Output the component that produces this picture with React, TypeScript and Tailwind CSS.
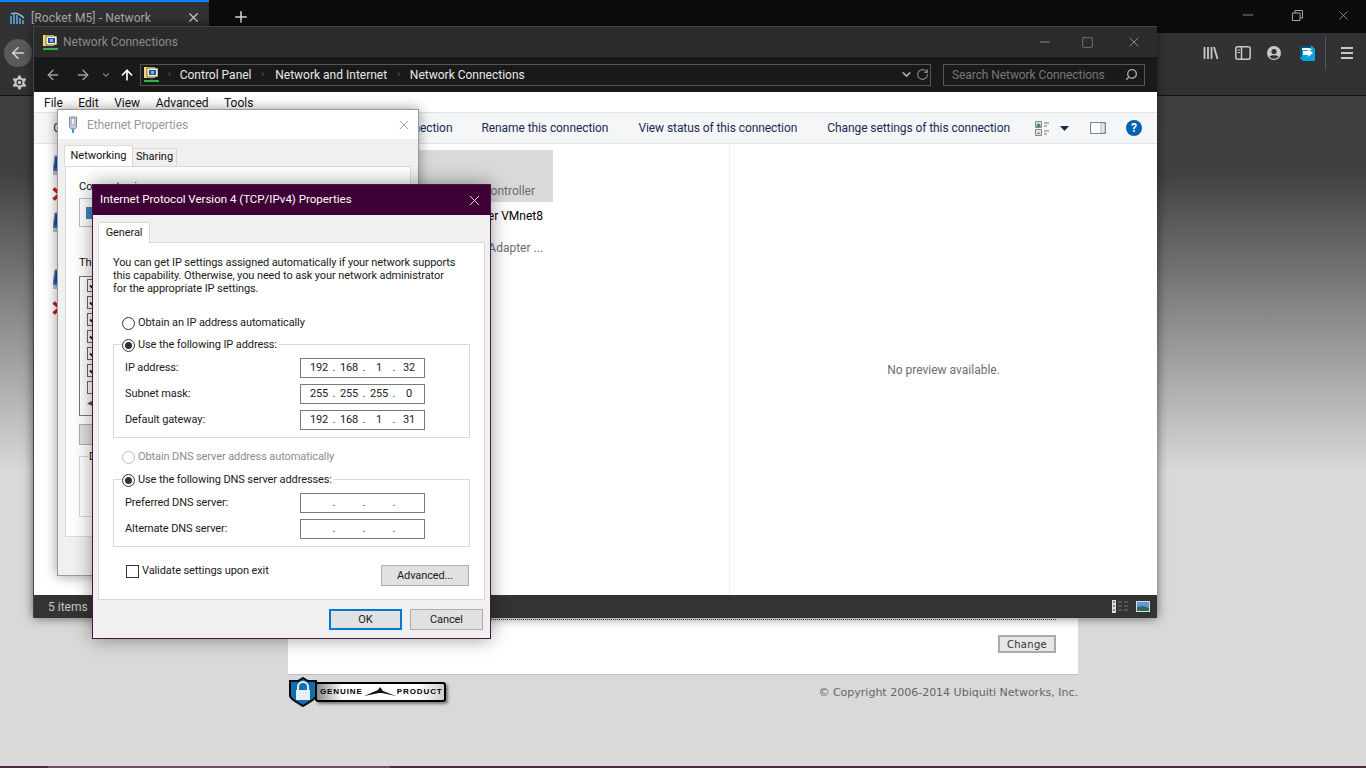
import { ArrowLeft, ArrowRight, ArrowUp, ChevronDown, Minus, Plus, RotateCw, Search, Settings, Square, X } from "lucide-react";

const NetIcon = () => (
  <svg width="17" height="17" viewBox="0 0 17 17" className="shrink-0">
    <path d="M1 1h11v11H1z" fill="#f3d675" />
    <path d="M4 2h11v9H4z" fill="#fdf3c4" stroke="#222" strokeWidth="0.6" />
    <path d="M6 4h7v5H6z" fill="#1b4fa8" />
    <path d="M8 5h3v3H8z" fill="#7fb2ea" />
    <path d="M7 12h3v2H7z" fill="#333" />
    <path d="M1 14h15v2H1z" fill="#2fb34a" />
  </svg>
);

const PlugIcon = () => (
  <svg width="12" height="18" viewBox="0 0 12 18" className="shrink-0">
    <path d="M2.5 1h7v10l-1.5 2h-4L2.500 11z" fill="#c4ced8" stroke="#7f8c99" />
    <path d="M4.500 2.500h3v6h-3z" fill="#eef2f6" stroke="#8b98a5" strokeWidth="0.6" />
    <path d="M5 13h2v4H5z" fill="#2a9fd6" />
  </svg>
);

const Monitor = ({ failed }: { failed?: boolean }) => (
  <div className="relative w-[20px] h-[32px] shrink-0">
    <svg width="20" height="22" viewBox="0 0 20 22" className="absolute left-[2px] top-[4px]">
      <path d="M2 1h16v15H0z" fill="#2e5fb8" stroke="#6f88b8" />
      <path d="M3 3h13v10H1.500z" fill="#1d49a5" />
      <path d="M0 17h18v3H0z" fill="#b9bfca" />
    </svg>
    {failed && (
      <svg width="10" height="14" viewBox="0 0 10 14" className="absolute left-[1px] top-[36px]">
        <path d="M1.500 1.500 8 7 1.500 12.500" fill="none" stroke="#d5111c" strokeWidth="3.500" />
      </svg>
    )}
  </div>
);

const Radio = ({ on, disabled }: { on?: boolean; disabled?: boolean }) => (
  <span className={`flex items-center justify-center w-[13px] h-[13px] rounded-full border bg-white shrink-0 ${disabled ? "border-[#bcbcbc]" : "border-[#333]"}`}>
    {on && <span className="w-[7px] h-[7px] rounded-full bg-[#333]" />}
  </span>
);

const IpField = ({ parts }: { parts: string[] }) => (
  <div className="flex items-center w-[125px] h-[20px] border border-[#7a7a7a] bg-white pl-[7px] pt-[1px] text-[#222]">
    {parts.map((part, i) => (
      <div key={i} className="flex items-center">
        <span className="w-[22px] text-center">{part}</span>
        {i < 3 && <span className="w-[8px] text-center">.</span>}
      </div>
    ))}
  </div>
);

const FieldRow = ({ label, parts }: { label: string; parts: string[] }) => (
  <div className="flex items-center justify-between h-[20px] pl-[11px] pr-[44px]">
    <span className="pt-[1px]">{label}</span>
    <IpField parts={parts} />
  </div>
);

type TileLine = { text: string; end?: boolean };

const Tile = ({ lines, failed, selected, pr }: { lines: TileLine[]; failed?: boolean; selected?: boolean; pr?: string }) => (
  <div className={`flex h-[52px] pt-[1px] ${selected ? "bg-[#d9d9d9]" : ""}`}>
    <Monitor failed={failed} />
    <div className={`flex-1 flex flex-col leading-[16px] text-[#6d6d6d] pl-[12px] ${pr ?? ""}`}>
      {lines.map((line, i) => (
        <div key={i} className={`whitespace-nowrap ${line.end ? "self-end" : "self-start"} ${i === 0 ? "text-black" : ""}`}>{line.text}</div>
      ))}
    </div>
  </div>
);

const BrowserChrome = () => (
  <>
    <div className="flex items-stretch h-[33px] bg-[#0c0c0c] shrink-0">
      <div className="flex items-center w-[209px] border-t-2 border-[#0a84ff] bg-[#323234] pl-[10px] pr-[8px] text-[#a9a9a9]">
        <svg width="15" height="14" viewBox="0 0 15 14" className="mr-[6px]">
          <path d="M1 13V5M4 13V3M7 13V4M10 13V7M13 13V9" stroke="#58a6d8" strokeWidth="1.600" />
          <path d="M1 3Q7 0 14 7" stroke="#9fcbe8" fill="none" strokeWidth="1.200" />
        </svg>
        <span className="flex-1 tracking-[0.120px]">[Rocket M5] - Network</span>
        <X size={15} className="text-[#c8c8c8]" />
      </div>
      <Plus size={18} strokeWidth={2} className="self-center ml-[23px] text-[#d8d8d8]" />
      <div className="flex-1" />
      <div className="flex items-center gap-[34px] pr-[15px] pb-[3px] text-[#a5a5a5]">
        <Minus size={16} strokeWidth={1.200} className="mr-[2px]" />
        <svg width="11" height="11" viewBox="0 0 11 11" className="mr-[-1px]" fill="none" stroke="#a5a5a5">
          <path d="M.500 3h7.500v7.500H.500zM3 3V.500h7.500V8H8" />
        </svg>
        <X size={15} strokeWidth={1.200} />
      </div>
    </div>
    <div className="relative h-[63px] shrink-0 bg-[#323234] border-b border-[#111]">
      <div className="absolute left-[4px] top-[6px] flex items-center justify-center w-[28px] h-[28px] rounded-full bg-[#5a5a5c]">
        <ArrowLeft size={18} className="text-[#d8d8d8]" />
      </div>
      <Settings size={19} className="absolute left-[10px] top-[40px] text-[#c8c8c8]" fill="#c8c8c8" stroke="#323234" strokeWidth={1.500} />
      <div className="absolute right-0 top-[2px] flex items-center h-[36px] text-[#c8c8c8]">
        <svg width="16" height="14" viewBox="0 0 16 14" className="mr-[16px]">
          <path d="M1.500 1v12M5 1v12M8.500 1v12M11 1l3.500 12" stroke="#c8c8c8" strokeWidth="1.800" fill="none" />
        </svg>
        <svg width="16" height="14" viewBox="0 0 16 14" className="mr-[16px]">
          <rect x="0.800" y="0.800" width="14.400" height="12.400" rx="2" stroke="#c8c8c8" strokeWidth="1.500" fill="none" />
          <path d="M6.500 1v12" stroke="#c8c8c8" strokeWidth="1.500" />
          <path d="M2.500 4h2.500M2.500 6.500h2.500" stroke="#c8c8c8" />
        </svg>
        <svg width="14" height="14" viewBox="0 0 14 14" className="mr-[19px]">
          <circle cx="7" cy="7" r="7" fill="#c8c8c8" />
          <circle cx="7" cy="5.500" r="2.600" fill="#323234" />
          <path d="M2.500 10.800c1-2 8-2 9 0a6 6 0 0 1-9 0z" fill="#323234" />
        </svg>
        <svg width="15" height="15" viewBox="0 0 15 15" className="mr-[10px]">
          <path d="M0 0h12l3 3v12H3l-3-3z" fill="#05a5d8" />
          <path d="M0 0h11v2H2v9H0z" fill="#0b5378" />
          <path d="M2 2h8l2 2H2z" fill="#fff" />
          <path d="M3 5h5V3l5 4-5 4V9H3z" fill="#fff" />
        </svg>
        <div className="w-px h-[34px] bg-[#555] mr-[15px]" />
        <div className="flex flex-col gap-[3px] w-[12px] mr-[13px]">
          <div className="h-[2px] bg-[#c8c8c8]" />
          <div className="h-[2px] bg-[#c8c8c8]" />
          <div className="h-[2px] bg-[#c8c8c8]" />
        </div>
      </div>
    </div>
  </>
);

const WebPage = () => (
  <div className="flex-1 flex flex-col bg-[linear-gradient(#3f3f3f_0px,#404040_75px,#d9d9d9_375px)]">
    <div className="flex-1 pl-[288px] pr-[288px] pt-[10px] flex flex-col">
      <div className="h-[569px] shrink-0 bg-white border-b border-[#bdbdbd] flex flex-col justify-end pb-[20px] pl-[20px] pr-[22px]">
        <div className="border-t border-dotted border-[#555] h-[16px]" />
        <div className="flex justify-end mb-[1px]">
          <div className="flex items-center justify-center w-[58px] h-[18px] border-2 border-[#aaaaaa] bg-[#e6e6e6] font-['DejaVu_Sans',sans-serif] text-[10px] tracking-[0.300px] text-[#333]">Change</div>
        </div>
      </div>
      <div className="flex items-start justify-between pt-[2px] font-['DejaVu_Sans',sans-serif] text-[#666]">
        <div className="flex items-center h-[30px]">
          <svg width="30" height="30" viewBox="0 0 30 30" className="mr-[-3px] relative">
            <path d="M15 1l5 3h8v15c0 3-8 7-13 10C10 26 2 22 2 19V4h8z" fill="#0f6fb0" stroke="#0b0b0b" strokeWidth="2" />
            <path d="M10 13v-3a5 5 0 0 1 10 0v3" fill="none" stroke="#e8eef4" strokeWidth="2" />
            <path d="M8 13h14v10H8z" fill="#e8eef4" />
          </svg>
          <div className="flex items-center h-[20px] w-[131px] rounded-[3px] border-2 border-black bg-[linear-gradient(90deg,#8c8c8c,#ffffff_20%,#ffffff_80%,#cccccc)] pl-[3px] shadow-[2px_2px_3px_rgba(0,0,0,.45)] font-['Liberation_Sans',sans-serif] text-[8px] font-bold text-black tracking-[0.900px]">
            <span>GENUINE</span>
            <svg width="32" height="10" viewBox="0 0 32 10" className="mx-[1px] shrink-0">
              <path d="M0 9 14 3l2-3 3 4 13 5-14-3-3 0z" fill="#111" />
            </svg>
            <span>PRODUCT</span>
          </div>
        </div>
        <span className="text-[11px] leading-[30px] mt-[1px]">© Copyright 2006-2014 Ubiquiti Networks, Inc.</span>
      </div>
    </div>
    <div className="relative h-[2px] bg-[#4a2a45] shrink-0">
      <div className="absolute left-[48px] w-[342px] h-[2px] bg-[#6e4f69]" />
    </div>
  </div>
);

const Explorer = () => (
  <div className="absolute left-[33px] top-[26px] flex flex-col w-[1124px] h-[592px] bg-white border-l border-t border-[#444] shadow-[0_0_10px_rgba(0,0,0,.55)]">
    <div className="flex items-center h-[30px] bg-[#2b2b2b] pl-[8px] text-[#8a8a8a] shrink-0">
      <NetIcon />
      <span className="ml-[4px] flex-1">Network Connections</span>
      <div className="flex items-center gap-[28px] pr-[15px] text-[#a0a0a0]">
        <Minus size={16} strokeWidth={1.200} />
        <Square size={13} strokeWidth={1.100} className="mr-[4px]" />
        <X size={16} strokeWidth={1.200} />
      </div>
    </div>
    <div className="flex items-center h-[35px] bg-[#191919] pl-[11px] pr-[12px] shrink-0">
      <ArrowLeft size={16} className="text-[#a0a0a0]" />
      <ArrowRight size={16} className="ml-[14px] text-[#a0a0a0]" />
      <ChevronDown size={10} className="ml-[10px] text-[#777]" strokeWidth={3} />
      <ArrowUp size={16} strokeWidth={2.500} className="ml-[8px] text-white" />
      <div className="flex items-center flex-1 h-[22px] ml-[5px] border border-[#555] pl-[2px] text-[#e8e8e8]">
        <NetIcon />
        <span className="ml-[8px] mr-[9px] text-[#777] text-[9px]">›</span>
        <span>Control Panel</span>
        <span className="ml-[10px] mr-[11px] text-[#777] text-[9px]">›</span>
        <span>Network and Internet</span>
        <span className="mx-[10px] text-[#777] text-[9px]">›</span>
        <span>Network Connections</span>
        <div className="flex-1" />
        <ChevronDown size={13} strokeWidth={3} className="text-[#aaa]" />
        <RotateCw size={13} className="ml-[3px] mr-[1px] text-[#888]" />
      </div>
      <div className="flex items-center justify-between w-[202px] h-[22px] ml-[12px] border border-[#555] pl-[8px] pr-[6px] text-[#777]">
        <span className="tracking-[-0.080px]">Search Network Connections</span>
        <Search size={13} className="-scale-x-100 text-[#aaa]" strokeWidth={2.500} />
      </div>
    </div>
    <div className="flex items-center gap-[15.500px] h-[20px] pt-[2px] pl-[10px] text-[#111] shrink-0">
      <span>File</span>
      <span>Edit</span>
      <span>View</span>
      <span>Advanced</span>
      <span>Tools</span>
    </div>
    <div className="flex items-center justify-end h-[32px] bg-[#f5f6f7] border-y border-[#e1e3e6] pr-[15px] text-[#1c2a55] shrink-0 overflow-hidden">
      <div className="flex gap-[30px] whitespace-nowrap shrink-0 tracking-[-0.080px]">
        <span className="mr-[3px]">Connect To</span>
        <span>Disable this network device</span>
        <span className="mr-[-1px]">Diagnose this connection</span>
        <span>Rename this connection</span>
        <span>View status of this connection</span>
        <span>Change settings of this connection</span>
      </div>
      <svg width="15" height="15" viewBox="0 0 15 15" className="ml-[25px] shrink-0">
        <path d="M.500.500h6v6h-6zM.500 8.500h6v6h-6z" fill="#dfe6ee" stroke="#888" />
        <path d="M1.500 4l2-2 2 2v2h-4z" fill="#4d8a4d" />
        <path d="M1.500 13l2-2 2 2z" fill="#c4683e" />
        <path d="M9 2h5M9 5h3M9 10h5M9 13h3" stroke="#777" />
      </svg>
      <svg width="9" height="5" viewBox="0 0 9 5" className="ml-[10px] shrink-0">
        <path d="M0 0h9L4.500 5z" fill="#1c2a55" />
      </svg>
      <svg width="16" height="12" viewBox="0 0 16 12" className="ml-[21px] shrink-0">
        <path d="M.500.500h15v11H.500z" fill="#fff" stroke="#7a8794" strokeWidth="1.200" />
        <path d="M11 1h4v10h-4z" fill="#dfeaf6" stroke="#7a8794" strokeWidth="0.600" />
      </svg>
      <div className="flex items-center justify-center ml-[20px] w-[16px] h-[16px] shrink-0 rounded-full bg-[#0063b1] text-white text-[12px] font-bold">?</div>
    </div>
    <div className="flex flex-1 min-h-0">
      <div className="w-[696px] border-r border-[#f0f0f0] pl-[17px] pt-[6px]">
        <div className="grid grid-cols-[245px_257px] gap-y-[5px]">
          <Tile lines={[{ text: "Bluetooth Network" }, { text: "Not connected" }, { text: "Bluetooth Device" }]} failed />
          <Tile lines={[{ text: "Ethernet" }, { text: "Network cable" }, { text: "Realtek PCIe GBE Family Controller", end: true }]} selected pr="pr-[18px]" />
          <Tile lines={[{ text: "VirtualBox Host-Only" }, { text: "Enabled" }, { text: "VirtualBox Adapter" }]} />
          <Tile lines={[{ text: "VMware Network Adapter VMnet8", end: true }, { text: "Enabled" }, { text: "VMware Virtual Ethernet Adapter ...", end: true }]} pr="pr-[10px]" />
          <Tile lines={[{ text: "Wi-Fi" }, { text: "Not connected" }, { text: "Intel Wireless" }]} failed />
        </div>
      </div>
      <div className="flex-1 flex items-center justify-center text-[#6d6d6d]">No preview available.</div>
    </div>
    <div className="flex items-center h-[23px] bg-[#333] pl-[14px] pr-[7px] text-[#c8c8c8] shrink-0">
      <span className="flex-1">5 items</span>
      <svg width="16" height="13" viewBox="0 0 16 13" className="mr-[8px]">
        <path d="M0 0h4v13H0z" fill="#ddd" />
        <path d="M1 2h2M1 6h2M1 10h2" stroke="#333" />
        <path d="M6 2h4M12 2h4M6 6h4M12 6h4M6 10h4M12 10h4" stroke="#777" />
      </svg>
      <svg width="14" height="11" viewBox="0 0 14 11">
        <path d="M0 0h14v11H0z" fill="#ddd" />
        <path d="M1 1h12v9H1z" fill="#5b9bd8" />
        <path d="M1 6l6-1 6 2v3H1z" fill="#2f6a62" />
      </svg>
    </div>
  </div>
);

const EthernetProperties = () => (
  <div className="absolute left-[57px] top-[109px] flex flex-col w-[362px] h-[467px] bg-[#f0f0f0] border border-[#9a9a9a] shadow-[0_0_12px_rgba(0,0,0,.4)] text-[11px]">
    <div className="flex items-center h-[29px] bg-white pl-[9px] pr-[6px] text-[#999] text-[12px] shrink-0">
      <PlugIcon />
      <span className="ml-[8px] flex-1 tracking-[-0.100px]">Ethernet Properties</span>
      <X size={16} strokeWidth={1} className="text-[#777]" />
    </div>
    <div className="flex items-end h-[27px] px-[6px] shrink-0">
      <div className="flex items-center justify-center w-[69px] h-[21px] bg-white border border-b-0 border-[#d9d9d9] text-[#111]">Networking</div>
      <div className="flex items-center justify-center w-[44px] h-[18px] bg-[#f0f0f0] border border-b-0 border-l-0 border-[#d9d9d9] text-[#111]">Sharing</div>
    </div>
    <div className="flex flex-col h-[371px] mx-[7px] bg-white border border-[#d9d9d9] px-[13px] pt-[12px] text-[#111]">
      <span className="leading-[16px]">Connect using:</span>
      <div className="h-[29px] mt-[3px] border border-[#bcbcbc] flex items-center pl-[6px]">
        <div className="w-[12px] h-[12px] bg-[#3c86c4]" />
      </div>
      <span className="mt-[28px] leading-[16px]">This:</span>
      <div className="flex flex-col gap-[4px] h-[140px] mt-[5px] border border-[#7a7a7a] pl-[7px] pt-[2px]">
        {[true, true, true, true, true, true, false].map((on, i) => (
          <div key={i} className="flex items-center justify-center w-[13px] h-[13px] border border-[#666]">
            {on && (
              <svg width="9" height="9" viewBox="0 0 9 9">
                <path d="M1 4.500 3.500 7 8 1.500" fill="none" stroke="#111" strokeWidth="1.800" />
              </svg>
            )}
          </div>
        ))}
        <div className="text-[#555] text-[10px] leading-[10px]">◀</div>
      </div>
      <div className="w-[60px] h-[21px] mt-[8px] bg-[#e1e1e1] border border-[#adadad]" />
      <div className="relative h-[61px] mt-[11px] border border-[#d9d9d9]">
        <span className="absolute left-[8px] -top-[8px] bg-white px-[1px] leading-[16px]">Desc</span>
      </div>
    </div>
  </div>
);

const TcpIpDialog = () => (
  <div className="absolute left-[92px] top-[184px] flex flex-col w-[399px] h-[455px] bg-[#f0f0f0] border border-[#4a1446] shadow-[0_0_18px_rgba(0,0,0,.4)] text-[#1a1a1a] text-[11px] tracking-[-0.100px]">
    <div className="flex items-center h-[30px] bg-[#3f0036] pl-[7px] pr-[7px] text-white text-[11.500px] tracking-normal shrink-0">
      <span className="flex-1">Internet Protocol Version 4 (TCP/IPv4) Properties</span>
      <X size={17} strokeWidth={1.200} />
    </div>
    <div className="flex items-end h-[27px] px-[5px] shrink-0">
      <div className="flex items-center justify-center w-[52px] h-[21px] bg-white border border-b-0 border-[#d9d9d9] relative top-px z-10">General</div>
    </div>
    <div className="h-[358px] mx-[5px] bg-white border border-[#d9d9d9] px-[14px] pt-[13px]">
      <p className="leading-[13px] whitespace-nowrap">
        You can get IP settings assigned automatically if your network supports<br />
        this capability. Otherwise, you need to ask your network administrator<br />
        for the appropriate IP settings.
      </p>
      <div className="flex items-center gap-[3px] h-[14px] mt-[21px] ml-[9px]">
        <Radio />
        <span className="pt-[1px]">Obtain an IP address automatically</span>
      </div>
      <div className="relative flex flex-col gap-[6px] h-[94px] mt-[14px] border border-[#d9d9d9] pt-[13px]">
        <div className="absolute left-[8px] -top-[7px] flex items-center gap-[3px] h-[14px] bg-white pr-[2px]">
          <Radio on />
          <span>Use the following IP address:</span>
        </div>
        <FieldRow label="IP address:" parts={["192", "168", "1", "32"]} />
        <FieldRow label="Subnet mask:" parts={["255", "255", "255", "0"]} />
        <FieldRow label="Default gateway:" parts={["192", "168", "1", "31"]} />
      </div>
      <div className="flex items-center gap-[3px] h-[14px] mt-[12px] ml-[9px] text-[#8c8c8c]">
        <Radio disabled />
        <span className="pt-[1px]">Obtain DNS server address automatically</span>
      </div>
      <div className="relative flex flex-col gap-[6px] h-[68px] mt-[15px] border border-[#d9d9d9] pt-[13px]">
        <div className="absolute left-[8px] -top-[7px] flex items-center gap-[3px] h-[14px] bg-white pr-[2px]">
          <Radio on />
          <span>Use the following DNS server addresses:</span>
        </div>
        <FieldRow label="Preferred DNS server:" parts={["", "", "", ""]} />
        <FieldRow label="Alternate DNS server:" parts={["", "", "", ""]} />
      </div>
      <div className="flex items-start justify-between mt-[17px] pl-[13px] pr-[1px]">
        <div className="flex items-center gap-[3px] h-[14px]">
          <span className="w-[13px] h-[13px] border border-[#333] bg-white" />
          <span className="pt-[1px]">Validate settings upon exit</span>
        </div>
        <div className="flex items-center justify-center w-[88px] h-[21px] mt-[1px] pt-[2px] bg-[#e1e1e1] border border-[#adadad]">Advanced...</div>
      </div>
    </div>
    <div className="flex justify-end gap-[8px] mt-[9px] pr-[7px]">
      <div className="flex items-center justify-center w-[73px] h-[21px] pt-[2px] bg-[#e1e1e1] border-2 border-[#0078d7]">OK</div>
      <div className="flex items-center justify-center w-[73px] h-[21px] pt-[2px] bg-[#e1e1e1] border border-[#adadad]">Cancel</div>
    </div>
  </div>
);

export default function App() {
  return (
    <div className="relative flex flex-col w-[1366px] h-[768px] overflow-hidden font-['Roboto',sans-serif] text-[12px]">
      <BrowserChrome />
      <WebPage />
      <Explorer />
      <EthernetProperties />
      <TcpIpDialog />
    </div>
  );
}
